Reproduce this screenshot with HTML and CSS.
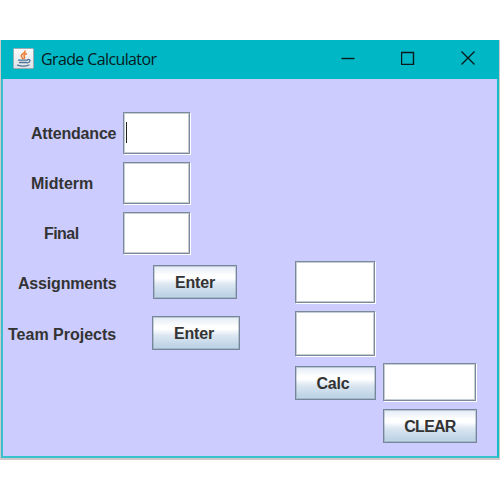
FILE: index.html
```html
<!DOCTYPE html>
<html lang="en">
<head>
<meta charset="utf-8">
<title>Grade Calculator</title>
<link rel="stylesheet" href="styles.css">
</head>
<body>
<main class="window">
  <header class="titlebar">
    <svg class="java" width="21" height="21" viewBox="0 0 21 21">
      <defs><linearGradient id="tile" x2="0" y2="1"><stop stop-color="#fafafa"/><stop offset="1" stop-color="#dfe3e8"/></linearGradient></defs>
      <rect x=".5" y=".5" width="20" height="20" rx="1" fill="url(#tile)" stroke="#9eabb1"/>
      <g fill="none" stroke-linecap="round">
        <path d="M12 3c1 2-4 3-3.800 5 .2 1.200 1.500 1.400 1.500 2.500M13.500 5.800c-2 .8-3.200 1.500-2.200 2.700.6.8.3 1.500-.2 2" stroke="#ee7b2d" stroke-width="1.500"/>
        <path d="M5.500 12.200h9M6.500 14.500h7M4.500 17.200c3 1 8.500 1 11.500-.2M14.800 11.600c3.200-.6 3 2.600-.5 3.200" stroke="#4d7397" stroke-width="1.300"/>
      </g>
    </svg>
    <h1 class="title">Grade Calculator</h1>
    <div class="controls">
      <svg width="14" height="14" viewBox="0 0 14 14"><path d="M.5 7.500h13"/></svg>
      <svg width="14" height="14" viewBox="0 0 14 14"><path d="M.5 1.500h12v12h-12z"/></svg>
      <svg width="14" height="14" viewBox="0 0 14 14"><path d="M.5.5l13 13M13.500.5l-13 13"/></svg>
    </div>
  </header>
  <section class="form">
    <div class="row attendance"><label class="label">Attendance</label><div class="field small"><span class="caret"></span></div></div>
    <div class="row midterm"><label class="label">Midterm</label><div class="field small"></div></div>
    <div class="row final"><label class="label">Final</label><div class="field small"></div></div>
    <div class="row assignments"><label class="label">Assignments</label><button class="button enter">Enter</button><div class="field medium"></div></div>
    <div class="row projects"><label class="label">Team Projects</label><button class="button enter wide">Enter</button><div class="field medium"></div></div>
    <div class="row result"><button class="button calc">Calc</button><div class="field total"></div></div>
    <div class="row actions"><button class="button clear">CLEAR</button></div>
  </section>
</main>
</body>
</html>
```
FILE: styles.css
```css
* { box-sizing: border-box; }
body { margin: 0; width: 500px; height: 500px; padding: 40px 1px 0; overflow: hidden; background: #fff; }
.window {
  width: 498px; height: 418px; border: 2px solid #38c0cd; border-top: 0;
  border-right-color: #12bcc8;
  background: #ccf; box-shadow: 0 1px 0 1px #d0c8c8;
  clip-path: inset(0 -1px -2px -1px);
  font-family: "Liberation Sans", Arial, sans-serif;
}
.titlebar { display: flex; align-items: center; height: 39px; margin: 0 -2px; padding: 0 24px 2px 12px; background: #00b7c6; }
.java { flex: none; }
.title { margin: 0 0 0 7px; font: 400 16px/20px "Open Sans", "Noto Sans", sans-serif; color: #061a1c; letter-spacing: -0.62px; white-space: nowrap; }
.controls { display: flex; gap: 46px; margin: -2px 0 0 auto; }
.controls svg { fill: none; stroke: #0a1b1d; stroke-width: 1.400; }
.form { padding-top: 33px; }
.row { display: flex; align-items: center; height: 42px; margin-bottom: 8px; }
.label { width: 120px; padding-top: 2px; flex: none; font-size: 16px; font-weight: 700; line-height: 20px; letter-spacing: -0.18px; color: #333; white-space: nowrap; }
.attendance .label, .midterm .label { padding-left: 28px; }
.midterm .label { letter-spacing: 0; }
.final .label { padding-left: 41px; letter-spacing: -0.55px; }
.assignments { margin-top: -1px; }
.assignments .label { padding: 3px 0 0 15px; }
.projects .label { padding: 2px 0 0 5px; letter-spacing: 0; }
.field {
  flex: none; height: 42px; background: #fff; border: 1px solid #7a8a99;
  box-shadow: inset 1px 1px 0 #c5ccd4, inset -1px -1px 0 #c5ccd4, 1px 1px 0 #fff;
}
.small { width: 67px; }
.medium { width: 80px; margin-left: auto; margin-right: 122px; }
.caret { display: block; width: 1px; height: 21px; margin: 9px 0 0 2px; background: #222; }
.button {
  height: 34px; padding: 2px 0 0; border: 1px solid #75869a; border-radius: 0;
  background: linear-gradient(#e2ebf5 0, #fff 30%, #fff 38%, #dbe6f1 58%, #bfd4e7 90%, #bfd4e7 100%);
  box-shadow: inset 0 0 0 1px rgba(110, 130, 150, .35);
  font: 700 16px/20px "Liberation Sans", Arial, sans-serif; letter-spacing: -0.2px; color: #333;
}
.enter { width: 84px; margin-left: 30px; }
.enter.wide { width: 88px; margin: -2px 0 0 29px; padding-right: 4px; }
.projects { height: 45px; margin-bottom: 7px; }
.projects .medium { height: 45px; }
.result { height: 38px; padding-left: 292px; }
.calc { width: 81px; margin-top: 2px; padding-right: 5px; }
.total { width: 93px; height: 38px; margin-left: 7px; }
.actions { height: 34px; padding-left: 380px; }
.clear { width: 94px; letter-spacing: -0.75px; }
```
